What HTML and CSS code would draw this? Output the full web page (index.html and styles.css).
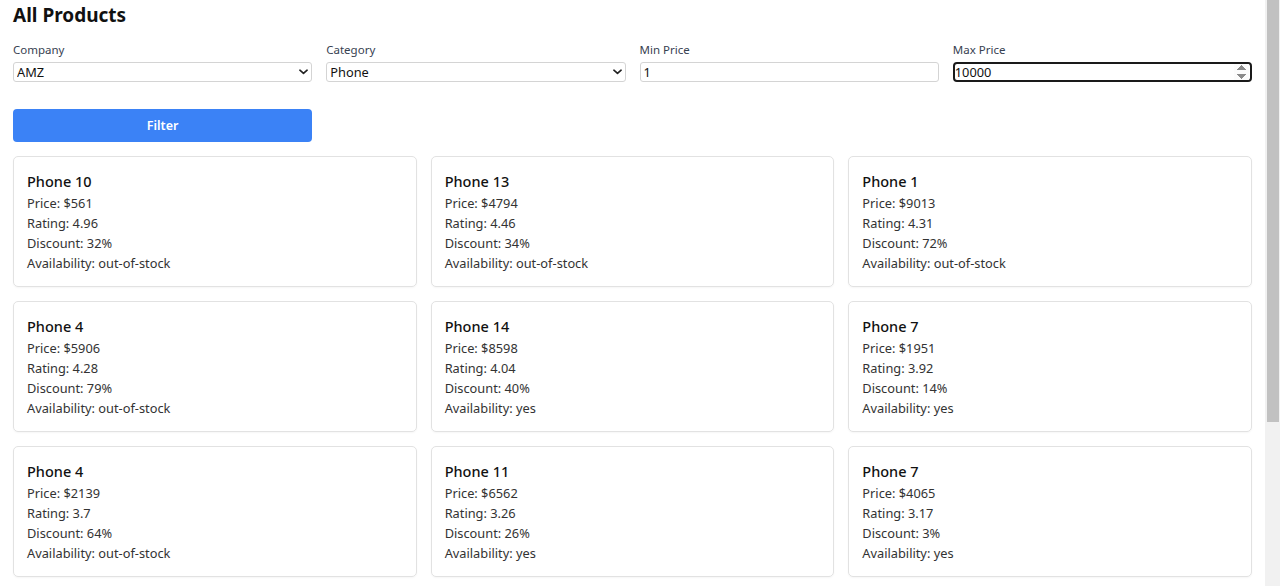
FILE: index.html
```html
<!DOCTYPE html>
<html lang="en">
<head>
<meta charset="utf-8">
<title>All Products</title>
<link rel="stylesheet" href="styles.css">
</head>
<body>
<main class="page">
  <h1 class="page-title">All Products</h1>
  <form class="filters">
    <div class="field">
      <label class="field-label">Company</label>
      <div class="select-wrap">
        <select class="control select"><option>AMZ</option></select>
        <svg class="chevron" viewBox="0 0 10 6" width="9" height="6"><path d="M1 1l4 3.6L9 1" fill="none" stroke="#222" stroke-width="1.8" stroke-linecap="round" stroke-linejoin="round"/></svg>
      </div>
    </div>
    <div class="field">
      <label class="field-label">Category</label>
      <div class="select-wrap">
        <select class="control select"><option>Phone</option></select>
        <svg class="chevron" viewBox="0 0 10 6" width="9" height="6"><path d="M1 1l4 3.6L9 1" fill="none" stroke="#222" stroke-width="1.8" stroke-linecap="round" stroke-linejoin="round"/></svg>
      </div>
    </div>
    <div class="field">
      <label class="field-label">Min Price</label>
      <input class="control" type="number" value="1">
    </div>
    <div class="field">
      <label class="field-label">Max Price</label>
      <input class="control control-active" type="number" value="10000">
    </div>
    <button type="button" class="filter-btn">Filter</button>
  </form>

  <section class="grid">
    <article class="card"><h2 class="card-title">Phone 10</h2><p>Price: $561</p><p>Rating: 4.96</p><p>Discount: 32%</p><p>Availability: out-of-stock</p></article>
    <article class="card"><h2 class="card-title">Phone 13</h2><p>Price: $4794</p><p>Rating: 4.46</p><p>Discount: 34%</p><p>Availability: out-of-stock</p></article>
    <article class="card"><h2 class="card-title">Phone 1</h2><p>Price: $9013</p><p>Rating: 4.31</p><p>Discount: 72%</p><p>Availability: out-of-stock</p></article>
    <article class="card"><h2 class="card-title">Phone 4</h2><p>Price: $5906</p><p>Rating: 4.28</p><p>Discount: 79%</p><p>Availability: out-of-stock</p></article>
    <article class="card"><h2 class="card-title">Phone 14</h2><p>Price: $8598</p><p>Rating: 4.04</p><p>Discount: 40%</p><p>Availability: yes</p></article>
    <article class="card"><h2 class="card-title">Phone 7</h2><p>Price: $1951</p><p>Rating: 3.92</p><p>Discount: 14%</p><p>Availability: yes</p></article>
    <article class="card"><h2 class="card-title">Phone 4</h2><p>Price: $2139</p><p>Rating: 3.7</p><p>Discount: 64%</p><p>Availability: out-of-stock</p></article>
    <article class="card"><h2 class="card-title">Phone 11</h2><p>Price: $6562</p><p>Rating: 3.26</p><p>Discount: 26%</p><p>Availability: yes</p></article>
    <article class="card"><h2 class="card-title">Phone 7</h2><p>Price: $4065</p><p>Rating: 3.17</p><p>Discount: 3%</p><p>Availability: yes</p></article>
  </section>
</main>
<div class="scrollbar" aria-hidden="true"><div class="scrollbar-thumb"></div></div>
</body>
</html>
```

FILE: styles.css
```css
html { background: #fff; }
body {
  margin: 0;
  font-family: "Noto Sans", "Open Sans", sans-serif;
  color: #111;
}
.page {
  padding: 0 28px 10px 13px;
}
.page-title {
  margin: 0;
  padding-top: 2px;
  font-size: 19px;
  line-height: 26px;
  font-weight: 700;
  color: #111;
}
.filters {
  margin-top: 14px;
  display: grid;
  grid-template-columns: repeat(4, 1fr);
  column-gap: 14px;
}
.field {
  display: flex;
  flex-direction: column;
}
.field-label {
  font-size: 11.5px;
  line-height: 16px;
  color: #374151;
  margin-bottom: 4px;
}
.select-wrap {
  position: relative;
  height: 20px;
}
.control {
  display: block;
  box-sizing: border-box;
  width: 100%;
  height: 20px;
  margin: 0;
  padding: 0 3px;
  border: 1px solid #d4d4d4;
  border-radius: 3px;
  background: #fff;
  font-family: inherit;
  font-size: 12.8px;
  color: #111;
  outline: none;
}
.select {
  appearance: none;
  -webkit-appearance: none;
}
.chevron {
  position: absolute;
  right: 4px;
  top: 7px;
  pointer-events: none;
}
.control-active {
  border: 2px solid #1a1a1a;
  border-radius: 4px;
  padding-left: 0;
  padding-right: 1px;
}
.control-active::-webkit-inner-spin-button {
  opacity: 1;
}
.filter-btn {
  grid-column: 1;
  margin-top: 27px;
  height: 33px;
  border: 0;
  border-radius: 4px;
  background: #3b82f6;
  color: #fff;
  font-family: inherit;
  font-size: 12.5px;
  font-weight: 600;
}
.grid {
  margin-top: 14px;
  display: grid;
  grid-template-columns: repeat(3, 1fr);
  gap: 14px;
}
.card {
  border: 1px solid #e2e2e2;
  border-radius: 5px;
  padding: 12px 13px 13px;
  box-shadow: 0 1px 2px rgba(0,0,0,0.04);
}
.card-title {
  margin: 0;
  font-size: 14.5px;
  line-height: 24px;
  font-weight: 500;
  color: #111;
}
.card p {
  margin: 0;
  font-size: 12.8px;
  line-height: 20px;
  color: #333;
}
.scrollbar {
  position: fixed;
  top: 0;
  right: 0;
  width: 15px;
  height: 100%;
  background: #f1f1f1;
}
.scrollbar-thumb {
  margin-left: 2px;
  width: 12px;
  height: 422px;
  background: #c1c1c1;
}
```
